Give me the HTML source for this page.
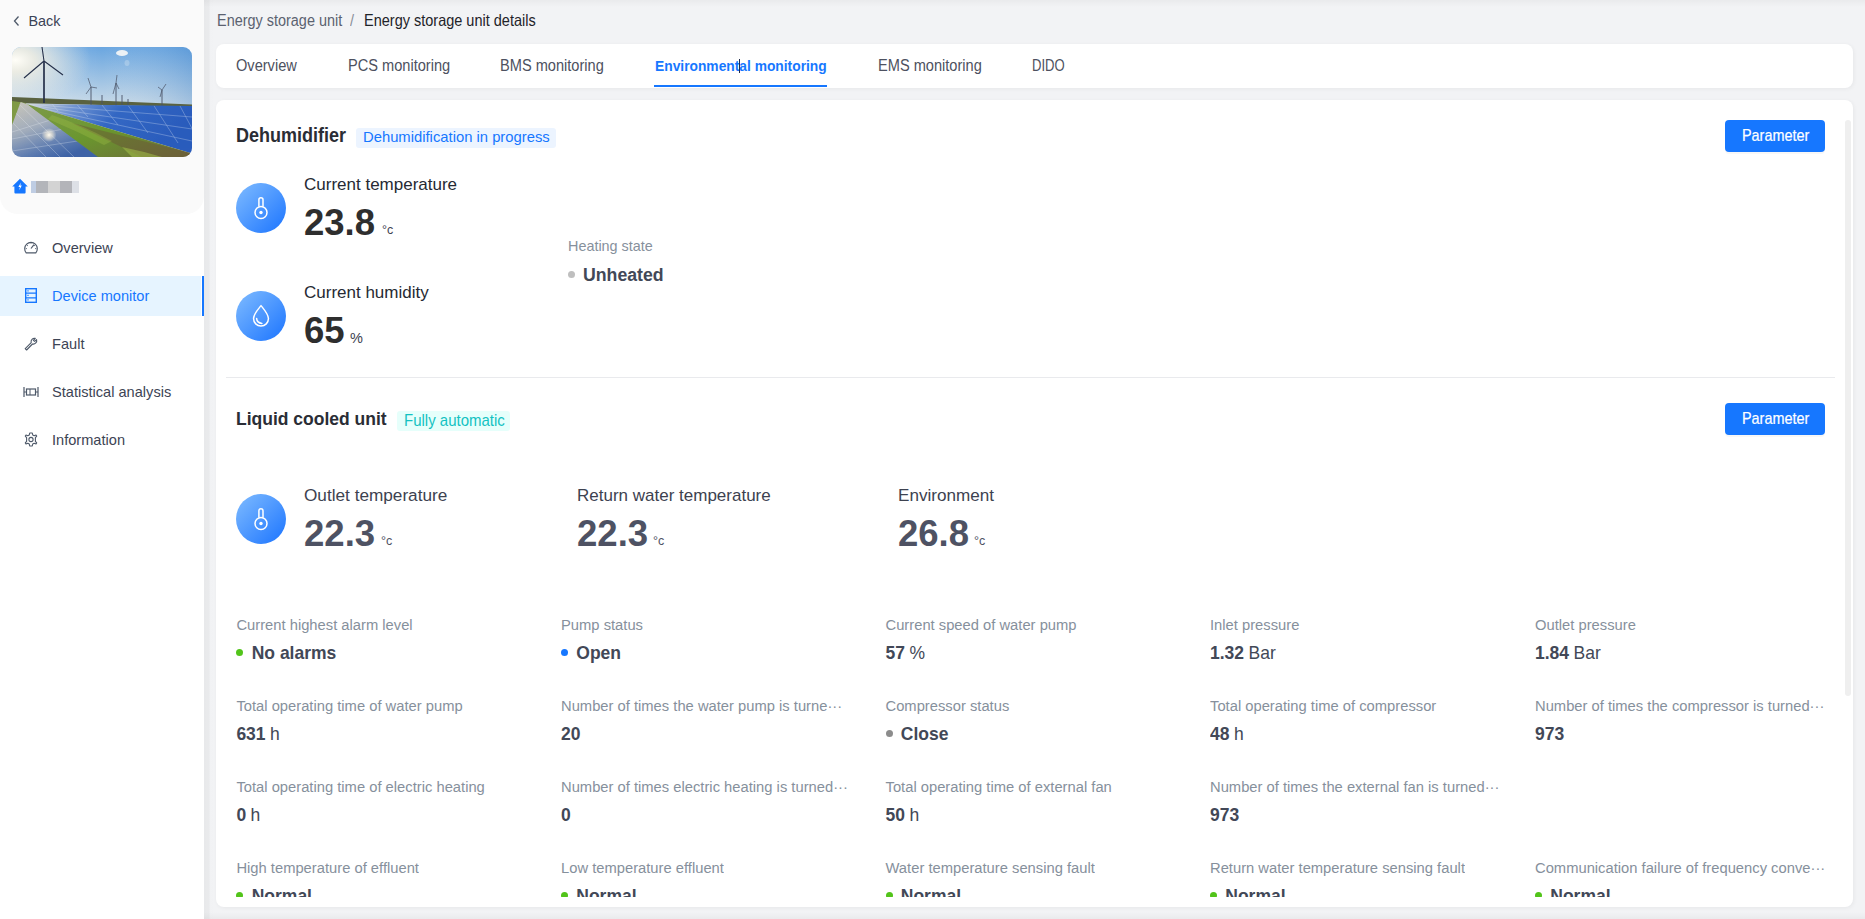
<!DOCTYPE html>
<html><head><meta charset="utf-8"><style>
html,body{margin:0;padding:0;width:1865px;height:919px;overflow:hidden;background:#f2f3f5;}
body{position:relative;font-family:"Liberation Sans", sans-serif;}
.t{position:absolute;white-space:nowrap;}
</style></head><body>
<div style="position:absolute;left:204px;top:0px;width:1661px;height:919px;background:#f2f3f5;"></div>
<div style="position:absolute;left:204px;top:0px;width:1661px;height:7px;background:linear-gradient(180deg,rgba(0,0,0,0.035),rgba(0,0,0,0));"></div>
<div style="position:absolute;left:204px;top:912px;width:1661px;height:7px;background:linear-gradient(0deg,rgba(0,0,0,0.035),rgba(0,0,0,0));"></div>
<div style="position:absolute;left:0px;top:0px;width:204px;height:919px;background:#ffffff;"></div>
<div style="position:absolute;left:0px;top:0px;width:204px;height:214px;background:#fafafa;border-radius:0 0 18px 18px;"></div>
<div style="position:absolute;left:204px;top:0px;width:12px;height:919px;background:linear-gradient(90deg,rgba(0,0,0,0.045),rgba(0,0,0,0.035) 40%,rgba(0,0,0,0.005) 55%,rgba(0,0,0,0));"></div>
<svg style="position:absolute;left:12px;top:14px" width="10" height="14" viewBox="0 0 10 14"><path d="M6.5 2.5 L2.5 7 L6.5 11.5" fill="none" stroke="#4e5969" stroke-width="1.3"/></svg>
<div class="t" style="left:28.5px;top:13.71px;font-size:14.4px;line-height:14.4px;color:#3a4356;transform:scaleY(1.05);transform-origin:0 12.19px;">Back</div>
<svg style="position:absolute;left:12px;top:47px;border-radius:9px" width="180" height="110" viewBox="0 0 180 110">
<defs>
<linearGradient id="sky" x1="0" y1="0" x2="0" y2="1"><stop offset="0" stop-color="#6aa6e0"/><stop offset="0.5" stop-color="#c2d6e6"/><stop offset="0.62" stop-color="#e2e4e0"/></linearGradient>
<linearGradient id="skyr" x1="0" y1="0" x2="1" y2="0"><stop offset="0" stop-color="#ffffff" stop-opacity="0.3"/><stop offset="0.5" stop-color="#ffffff" stop-opacity="0"/><stop offset="1" stop-color="#2a70c0" stop-opacity="0.22"/></linearGradient>
<radialGradient id="sun" cx="0.02" cy="0.12" r="0.42"><stop offset="0" stop-color="#fffef8" stop-opacity="1"/><stop offset="0.25" stop-color="#f6f1e2" stop-opacity="0.85"/><stop offset="1" stop-color="#f0ecdf" stop-opacity="0"/></radialGradient>
<linearGradient id="pan" x1="0" y1="0" x2="1" y2="0.3"><stop offset="0" stop-color="#d0d3d8"/><stop offset="0.3" stop-color="#6a8fd0"/><stop offset="0.55" stop-color="#3468c4"/><stop offset="1" stop-color="#2a5cbc"/></linearGradient>
<linearGradient id="pan2" x1="0" y1="0" x2="0.6" y2="1"><stop offset="0" stop-color="#c9c6bb"/><stop offset="0.45" stop-color="#a2adbc"/><stop offset="0.8" stop-color="#5c7bb0"/><stop offset="1" stop-color="#3e63a6"/></linearGradient>
<clipPath id="lp"><path d="M8.6 55 L14.6 56.9 L86 110 L0 110 L0 78 Z"/></clipPath>
<clipPath id="rp"><path d="M14.6 56.9 L180 59 L180 106.5 Z"/></clipPath>
<radialGradient id="refl" cx="0.5" cy="0.5" r="0.5"><stop offset="0" stop-color="#fffbef" stop-opacity="1"/><stop offset="0.5" stop-color="#f8f0dc" stop-opacity="0.6"/><stop offset="1" stop-color="#fffbef" stop-opacity="0"/></radialGradient>
<linearGradient id="grass" x1="0" y1="0" x2="1" y2="1"><stop offset="0" stop-color="#7d9a4a"/><stop offset="0.5" stop-color="#6a962e"/><stop offset="1" stop-color="#6e6a3a"/></linearGradient>
</defs>
<rect width="180" height="110" fill="url(#sky)"/>
<rect width="180" height="60" fill="url(#skyr)"/>
<rect width="180" height="110" fill="url(#sun)"/>
<ellipse cx="110" cy="6" rx="6" ry="3" fill="#f2f4f6" opacity="0.95"/>
<ellipse cx="115" cy="16" rx="2.5" ry="3" fill="#e6eef6" opacity="0.3"/>
<path d="M0 50 L180 57.5 L180 60 L0 56 Z" fill="#5a6240"/>
<path d="M0 54 L14 56 L20 80 L0 82 Z" fill="#7f9a44"/>
<g stroke="#25304a" fill="none">
<path d="M32 14 L32 56" stroke-width="1.7"/>
<path d="M32 14 L30 0 M32 14 L12 31 M32 14 L51 28" stroke-width="1.1"/>
</g>
<g stroke="#4a5366" fill="none">
<path d="M79 40 L79 59 M104 36 L104 59 M110 48 L110 58 M150 43 L150 61 M90 48 L90 57 M116 52 L116 59" stroke-width="0.9"/>
<path d="M79 40 L76 31 M79 40 L74 47 M79 40 L85 41 M104 36 L105 28 M104 36 L101 47 M104 36 L107 42 M150 43 L154 37 M150 43 L146 40 M150 43 L148 50" stroke-width="0.7"/>
</g>
<path d="M14.6 56.9 L180 59 L180 106.5 Z" fill="url(#pan)"/>
<g stroke="#e3ebf7" stroke-width="0.5" opacity="0.6" clip-path="url(#rp)">
<path d="M14 57 L180 70 M14 57.5 L180 82 M14 58 L180 94"/>
<path d="M40 57 L46 64 M65 57.6 L76 70 M90 58 L106 78 M116 58.4 L136 86 M142 58.8 L166 96 M168 59 L190 100"/>
</g>
<path d="M14.6 56.9 L180 106.5 L180 110 L80 110 Z" fill="url(#grass)"/>
<path d="M60 76 L180 106.5 L180 110 L130 110 Z" fill="#6a5238" opacity="0.45"/>
<path d="M40 68 Q70 78 100 94 L92 98 Q65 84 36 72 Z" fill="#a8c84a" opacity="0.3"/>
<path d="M110 100 Q130 104 150 110 L120 110 Z" fill="#a8c84a" opacity="0.5"/>
<path d="M8.6 55 L14.6 56.9 L86 110 L0 110 L0 78 Z" fill="url(#pan2)"/>
<ellipse cx="37" cy="88" rx="7.5" ry="7" fill="url(#refl)"/>
<g stroke="#eef2f7" stroke-width="0.5" opacity="0.55" clip-path="url(#lp)">
<path d="M0 75 L34 110 M0 62 L48 110 M6 56 L62 110 M0 92 L62 80 M0 104 L72 93 M0 85 L48 70"/>
</g>
</svg>
<svg style="position:absolute;left:12px;top:178px" width="16" height="16" viewBox="0 0 16 16"><path d="M8 0.8 L15.8 8.6 L13.6 8.6 L13.6 14.6 Q13.6 15.6 12.6 15.6 L3.4 15.6 Q2.4 15.6 2.4 14.6 L2.4 8.6 L0.2 8.6 Z" fill="#1677ff"/><path d="M8.9 4.5 L6.4 9 L8 9 L7.2 12.2 L9.8 7.6 L8.2 7.6 Z" fill="#fff"/></svg>
<div style="position:absolute;left:31px;top:181px;width:5px;height:12px;background:#bfcde3;"></div>
<div style="position:absolute;left:36px;top:181px;width:12px;height:12px;background:#b3b5ba;"></div>
<div style="position:absolute;left:48px;top:181px;width:12px;height:12px;background:#d3d3d3;"></div>
<div style="position:absolute;left:60px;top:181px;width:12px;height:12px;background:#b3b4b9;"></div>
<div style="position:absolute;left:72px;top:181px;width:7px;height:12px;background:#dde0e6;"></div>
<div style="position:absolute;left:0px;top:276px;width:201px;height:40px;background:#e6f4ff;"></div>
<div style="position:absolute;left:202px;top:276px;width:2px;height:40px;background:#1677ff;"></div>
<svg style="position:absolute;left:23px;top:240px" width="16" height="14" viewBox="0 0 16 14"><path d="M3.2 12.8 A6.3 6.3 0 1 1 12.8 12.8 Z" fill="none" stroke="#4e5969" stroke-width="1.2" stroke-linejoin="round"/><path d="M8 8.5 L11 4.6" stroke="#4e5969" stroke-width="1.2"/><path d="M4 5.2 L4.8 5.8 M8 2.6 L8 3.6 M12 5.2 L11.2 5.8 M2.8 8.6 L3.8 8.6 M13.2 8.6 L12.2 8.6" stroke="#4e5969" stroke-width="1"/></svg>
<div class="t" style="left:52px;top:240.74px;font-size:14.6px;line-height:14.6px;color:#3d4454;transform:scaleY(1.05);transform-origin:0 12.36px;">Overview</div>
<svg style="position:absolute;left:25px;top:288px" width="12" height="15" viewBox="0 0 12 15"><rect x="0.7" y="0.7" width="10.6" height="13.6" fill="none" stroke="#1677ff" stroke-width="1.4"/><path d="M0.7 5.2 H11.3 M0.7 9.8 H11.3" stroke="#1677ff" stroke-width="1.2"/><path d="M3 2.3 V3.6 M3 6.8 V8.1 M3 11.3 V12.6" stroke="#1677ff" stroke-width="1.2"/></svg>
<div class="t" style="left:52px;top:288.74px;font-size:14.6px;line-height:14.6px;color:#1677ff;transform:scaleY(1.05);transform-origin:0 12.36px;">Device monitor</div>
<svg style="position:absolute;left:24px;top:337px" width="14" height="14" viewBox="0 0 14 14"><path d="M12.6 2.6 L10.6 4.4 L9.4 3.3 L11.3 1.3 A3.5 3.5 0 0 0 7.2 5.7 L1.2 11.6 L2.6 13 L8.5 7 A3.5 3.5 0 0 0 12.6 2.6 Z" fill="none" stroke="#4e5969" stroke-width="1.1" stroke-linejoin="round"/></svg>
<div class="t" style="left:52px;top:336.74px;font-size:14.6px;line-height:14.6px;color:#3d4454;transform:scaleY(1.05);transform-origin:0 12.36px;">Fault</div>
<svg style="position:absolute;left:23px;top:386px" width="16" height="12" viewBox="0 0 16 12"><path d="M1 1 V11 M15 1 V11" stroke="#4e5969" stroke-width="1.2"/><rect x="3.5" y="3" width="9" height="6" fill="none" stroke="#4e5969" stroke-width="1.2"/><path d="M1 6 H3.5 M12.5 6 H15 M7 3 V9" stroke="#4e5969" stroke-width="1"/></svg>
<div class="t" style="left:52px;top:384.74px;font-size:14.6px;line-height:14.6px;color:#3d4454;transform:scaleY(1.05);transform-origin:0 12.36px;">Statistical analysis</div>
<svg style="position:absolute;left:24px;top:432px" width="14" height="15" viewBox="0 0 14 15"><path d="M7 1 L8.3 1 L8.7 2.9 L10.2 3.7 L12 3 L12.7 4.1 L11.4 5.6 L11.4 9.4 L12.7 10.9 L12 12 L10.2 11.3 L8.7 12.1 L8.3 14 L5.7 14 L5.3 12.1 L3.8 11.3 L2 12 L1.3 10.9 L2.6 9.4 L2.6 5.6 L1.3 4.1 L2 3 L3.8 3.7 L5.3 2.9 L5.7 1 Z" fill="none" stroke="#4e5969" stroke-width="1.1" stroke-linejoin="round"/><circle cx="7" cy="7.5" r="2.1" fill="none" stroke="#4e5969" stroke-width="1.1"/></svg>
<div class="t" style="left:52px;top:432.74px;font-size:14.6px;line-height:14.6px;color:#3d4454;transform:scaleY(1.05);transform-origin:0 12.36px;">Information</div>
<div class="t" style="left:217px;top:13.77px;font-size:14.45px;line-height:14.45px;color:#5b6270;transform:scaleY(1.08);transform-origin:0 12.23px;">Energy storage unit</div>
<div class="t" style="left:350px;top:13.73px;font-size:14.5px;line-height:14.5px;color:#8a8f99;transform:scaleY(1.08);transform-origin:0 12.27px;">/</div>
<div class="t" style="left:364px;top:13.73px;font-size:14.5px;line-height:14.5px;color:#1f2329;transform:scaleY(1.08);transform-origin:0 12.27px;">Energy storage unit details</div>
<div style="position:absolute;left:216px;top:44px;width:1637px;height:44px;background:#fff;border-radius:8px;box-shadow:1px 1px 4px rgba(0,0,0,0.05);"></div>
<div class="t" style="left:236px;top:58.64px;font-size:14.6px;line-height:14.6px;color:#4d5160;transform:scaleY(1.1);transform-origin:0 12.36px;">Overview</div>
<div class="t" style="left:348px;top:58.64px;font-size:14.6px;line-height:14.6px;color:#4d5160;transform:scaleY(1.1);transform-origin:0 12.36px;">PCS monitoring</div>
<div class="t" style="left:500px;top:58.64px;font-size:14.6px;line-height:14.6px;color:#4d5160;transform:scaleY(1.1);transform-origin:0 12.36px;">BMS monitoring</div>
<div class="t" style="left:878px;top:58.64px;font-size:14.6px;line-height:14.6px;color:#4d5160;transform:scaleY(1.1);transform-origin:0 12.36px;">EMS monitoring</div>
<div class="t" style="left:1032px;top:59.91px;font-size:13.1px;line-height:13.1px;color:#4d5160;transform:scaleY(1.22);transform-origin:0 11.09px;">DIDO</div>
<div class="t" style="left:655px;top:59.72px;font-size:13.8px;line-height:13.8px;color:#1677ff;font-weight:700;transform:scaleY(1.12);transform-origin:0 11.68px;">Environmental monitoring</div>
<div style="position:absolute;left:654px;top:85px;width:173px;height:2px;background:#1677ff;"></div>
<div style="position:absolute;left:739px;top:59px;width:1px;height:14px;background:#1f2a4a;"></div>
<div style="position:absolute;left:216px;top:100px;width:1637px;height:807px;background:#fff;border-radius:8px;box-shadow:1px 1px 4px rgba(0,0,0,0.05);"></div>
<div style="position:absolute;left:1845px;top:120px;width:6px;height:576px;background:#efefef;border-radius:3px;"></div>
<div class="t" style="left:236px;top:127.46px;font-size:18px;line-height:18px;color:#2a2d35;font-weight:700;transform:scaleY(1.08);transform-origin:0 15.24px;">Dehumidifier</div>
<div style="position:absolute;left:356px;top:128px;width:200px;height:19.5px;background:#ecf4ff;border-radius:3px;"></div>
<div class="t" style="left:363px;top:130.27px;font-size:14.8px;line-height:14.8px;color:#1677ff;">Dehumidification in progress</div>
<div style="position:absolute;left:1725px;top:120px;width:100px;height:32px;background:#1677ff;border-radius:4px;box-shadow:0 2px 0 rgba(0,0,0,0.03);"></div>
<div class="t" style="left:1742px;top:128.81px;font-size:14.4px;line-height:14.4px;color:#fff;transform:scaleY(1.12);transform-origin:0 12.19px;-webkit-text-stroke:0.2px #fff;">Parameter</div>
<svg style="position:absolute;left:236px;top:183px" width="50" height="50" viewBox="0 0 50 50"><defs><linearGradient id="g183" x1="0" y1="0" x2="1" y2="1"><stop offset="0" stop-color="#80bcff"/><stop offset="1" stop-color="#1b74ff"/></linearGradient></defs><circle cx="25" cy="25" r="25" fill="url(#g183)"/><path d="M22.9 23.6 V16.7 A2.05 2.05 0 0 1 27 16.7 V23.6" fill="none" stroke="#fff" stroke-width="1.5"/><circle cx="25" cy="29.5" r="6" fill="none" stroke="#fff" stroke-width="1.5"/><circle cx="25" cy="29.5" r="1.7" fill="#fff"/></svg>
<div class="t" style="left:304px;top:175.91px;font-size:17px;line-height:17px;color:#262a33;">Current temperature</div>
<div class="t" style="left:304px;top:204.80px;font-size:36.5px;line-height:36.5px;color:#2e2e2e;font-weight:700;">23.8</div>
<div class="t" style="left:382px;top:224.42px;font-size:12.5px;line-height:12.5px;color:#3d4250;">°c</div>
<svg style="position:absolute;left:236px;top:291px" width="50" height="50" viewBox="0 0 50 50"><defs><linearGradient id="g291" x1="0" y1="0" x2="1" y2="1"><stop offset="0" stop-color="#80bcff"/><stop offset="1" stop-color="#1b74ff"/></linearGradient></defs><circle cx="25" cy="25" r="25" fill="url(#g291)"/><path d="M25 14.6 C28 18.3 32.45 23.3 32.45 27.6 A7.45 7.45 0 0 1 17.55 27.6 C17.55 23.3 22 18.3 25 14.6 Z" fill="none" stroke="#fff" stroke-width="1.5" stroke-linejoin="round"/><path d="M20.6 27.4 Q20.9 31.9 25.9 32.4" fill="none" stroke="#fff" stroke-width="1.5" stroke-linecap="round"/></svg>
<div class="t" style="left:304px;top:283.91px;font-size:17px;line-height:17px;color:#262a33;">Current humidity</div>
<div class="t" style="left:304px;top:312.60px;font-size:36.5px;line-height:36.5px;color:#2e2e2e;font-weight:700;">65</div>
<div class="t" style="left:350px;top:331.23px;font-size:14.5px;line-height:14.5px;color:#3d4250;">%</div>
<div class="t" style="left:568px;top:239.01px;font-size:14.4px;line-height:14.4px;color:#86909c;">Heating state</div>
<div style="position:absolute;left:568px;top:270.5px;width:7px;height:7px;background:#bfbfbf;border-radius:50%;"></div>
<div class="t" style="left:583px;top:266.72px;font-size:17.7px;line-height:17.7px;color:#424857;font-weight:700;transform:scaleY(1.06);transform-origin:0 14.98px;">Unheated</div>
<div style="position:absolute;left:226px;top:377px;width:1609px;height:1px;background:#e9eaed;"></div>
<div class="t" style="left:236px;top:411.49px;font-size:17.5px;line-height:17.5px;color:#2a2d35;font-weight:700;transform:scaleY(1.1);transform-origin:0 14.81px;">Liquid cooled unit</div>
<div style="position:absolute;left:397px;top:411px;width:113px;height:20px;background:#e6fffb;border-radius:3px;"></div>
<div class="t" style="left:404px;top:413.30px;font-size:15px;line-height:15px;color:#13c2c2;transform:scaleY(1.08);transform-origin:0 12.70px;">Fully automatic</div>
<div style="position:absolute;left:1725px;top:403px;width:100px;height:32px;background:#1677ff;border-radius:4px;box-shadow:0 2px 0 rgba(0,0,0,0.03);"></div>
<div class="t" style="left:1742px;top:411.81px;font-size:14.4px;line-height:14.4px;color:#fff;transform:scaleY(1.12);transform-origin:0 12.19px;-webkit-text-stroke:0.2px #fff;">Parameter</div>
<svg style="position:absolute;left:236px;top:494px" width="50" height="50" viewBox="0 0 50 50"><defs><linearGradient id="g494" x1="0" y1="0" x2="1" y2="1"><stop offset="0" stop-color="#80bcff"/><stop offset="1" stop-color="#1b74ff"/></linearGradient></defs><circle cx="25" cy="25" r="25" fill="url(#g494)"/><path d="M22.9 23.6 V16.7 A2.05 2.05 0 0 1 27 16.7 V23.6" fill="none" stroke="#fff" stroke-width="1.5"/><circle cx="25" cy="29.5" r="6" fill="none" stroke="#fff" stroke-width="1.5"/><circle cx="25" cy="29.5" r="1.7" fill="#fff"/></svg>
<div class="t" style="left:304px;top:487.04px;font-size:17.2px;line-height:17.2px;color:#3d4250;">Outlet temperature</div>
<div class="t" style="left:304px;top:515.72px;font-size:36.6px;line-height:36.6px;color:#4e5263;font-weight:700;">22.3</div>
<div class="t" style="left:381px;top:535.42px;font-size:12.5px;line-height:12.5px;color:#4e5263;">°c</div>
<div class="t" style="left:577px;top:487.21px;font-size:17px;line-height:17px;color:#3d4250;">Return water temperature</div>
<div class="t" style="left:577px;top:515.72px;font-size:36.6px;line-height:36.6px;color:#4e5263;font-weight:700;">22.3</div>
<div class="t" style="left:653px;top:535.42px;font-size:12.5px;line-height:12.5px;color:#4e5263;">°c</div>
<div class="t" style="left:898px;top:487.12px;font-size:17.1px;line-height:17.1px;color:#3d4250;">Environment</div>
<div class="t" style="left:898px;top:515.80px;font-size:36.5px;line-height:36.5px;color:#4e5263;font-weight:700;">26.8</div>
<div class="t" style="left:974px;top:535.42px;font-size:12.5px;line-height:12.5px;color:#4e5263;">°c</div>
<div style="position:absolute;left:216px;top:100px;width:1620px;height:797px;overflow:hidden">
<div class="t" style="left:20.4px;top:517.71px;font-size:14.75px;line-height:14.75px;color:#86909c;transform:scaleY(1.04);transform-origin:0 12.49px;">Current highest alarm level</div>
<div style="position:absolute;left:20.4px;top:549.0px;width:7px;height:7px;border-radius:50%;background:#52c41a"></div>
<div class="t" style="left:35.7px;top:544.89px;font-size:17.5px;line-height:17.5px;color:#424857;font-weight:700;transform:scaleY(1.1);transform-origin:0 14.81px;">No alarms</div>
<div class="t" style="left:345.0px;top:517.71px;font-size:14.75px;line-height:14.75px;color:#86909c;transform:scaleY(1.04);transform-origin:0 12.49px;">Pump status</div>
<div style="position:absolute;left:345.0px;top:549.0px;width:7px;height:7px;border-radius:50%;background:#1677ff"></div>
<div class="t" style="left:360.3px;top:544.89px;font-size:17.5px;line-height:17.5px;color:#424857;font-weight:700;transform:scaleY(1.1);transform-origin:0 14.81px;">Open</div>
<div class="t" style="left:669.5px;top:517.71px;font-size:14.75px;line-height:14.75px;color:#86909c;transform:scaleY(1.04);transform-origin:0 12.49px;">Current speed of water pump</div>
<div class="t" style="left:669.5px;top:544.89px;font-size:17.5px;line-height:17.5px;color:#424857;font-weight:700;transform:scaleY(1.1);transform-origin:0 14.81px;">57</div>
<div class="t" style="left:693.5px;top:544.89px;font-size:17.5px;line-height:17.5px;color:#424857;transform:scaleY(1.1);transform-origin:0 14.81px;">%</div>
<div class="t" style="left:994.0px;top:517.71px;font-size:14.75px;line-height:14.75px;color:#86909c;transform:scaleY(1.04);transform-origin:0 12.49px;">Inlet pressure</div>
<div class="t" style="left:994.0px;top:544.89px;font-size:17.5px;line-height:17.5px;color:#424857;font-weight:700;transform:scaleY(1.1);transform-origin:0 14.81px;">1.32</div>
<div class="t" style="left:1032.6px;top:544.89px;font-size:17.5px;line-height:17.5px;color:#424857;transform:scaleY(1.1);transform-origin:0 14.81px;">Bar</div>
<div class="t" style="left:1319.0px;top:517.71px;font-size:14.75px;line-height:14.75px;color:#86909c;transform:scaleY(1.04);transform-origin:0 12.49px;">Outlet pressure</div>
<div class="t" style="left:1319.0px;top:544.89px;font-size:17.5px;line-height:17.5px;color:#424857;font-weight:700;transform:scaleY(1.1);transform-origin:0 14.81px;">1.84</div>
<div class="t" style="left:1357.6px;top:544.89px;font-size:17.5px;line-height:17.5px;color:#424857;transform:scaleY(1.1);transform-origin:0 14.81px;">Bar</div>
<div class="t" style="left:20.4px;top:598.51px;font-size:14.75px;line-height:14.75px;color:#86909c;transform:scaleY(1.04);transform-origin:0 12.49px;">Total operating time of water pump</div>
<div class="t" style="left:20.4px;top:625.89px;font-size:17.5px;line-height:17.5px;color:#424857;font-weight:700;transform:scaleY(1.1);transform-origin:0 14.81px;">631</div>
<div class="t" style="left:54.1px;top:625.89px;font-size:17.5px;line-height:17.5px;color:#424857;transform:scaleY(1.1);transform-origin:0 14.81px;">h</div>
<div class="t" style="left:345.0px;top:598.51px;font-size:14.75px;line-height:14.75px;color:#86909c;transform:scaleY(1.04);transform-origin:0 12.49px;">Number of times the water pump is turne···</div>
<div class="t" style="left:345.0px;top:625.89px;font-size:17.5px;line-height:17.5px;color:#424857;font-weight:700;transform:scaleY(1.1);transform-origin:0 14.81px;">20</div>
<div class="t" style="left:669.5px;top:598.51px;font-size:14.75px;line-height:14.75px;color:#86909c;transform:scaleY(1.04);transform-origin:0 12.49px;">Compressor status</div>
<div style="position:absolute;left:669.5px;top:630.0px;width:7px;height:7px;border-radius:50%;background:#8c8c8c"></div>
<div class="t" style="left:684.8px;top:625.89px;font-size:17.5px;line-height:17.5px;color:#424857;font-weight:700;transform:scaleY(1.1);transform-origin:0 14.81px;">Close</div>
<div class="t" style="left:994.0px;top:598.51px;font-size:14.75px;line-height:14.75px;color:#86909c;transform:scaleY(1.04);transform-origin:0 12.49px;">Total operating time of compressor</div>
<div class="t" style="left:994.0px;top:625.89px;font-size:17.5px;line-height:17.5px;color:#424857;font-weight:700;transform:scaleY(1.1);transform-origin:0 14.81px;">48</div>
<div class="t" style="left:1018.0px;top:625.89px;font-size:17.5px;line-height:17.5px;color:#424857;transform:scaleY(1.1);transform-origin:0 14.81px;">h</div>
<div class="t" style="left:1319.0px;top:598.51px;font-size:14.75px;line-height:14.75px;color:#86909c;transform:scaleY(1.04);transform-origin:0 12.49px;">Number of times the compressor is turned···</div>
<div class="t" style="left:1319.0px;top:625.89px;font-size:17.5px;line-height:17.5px;color:#424857;font-weight:700;transform:scaleY(1.1);transform-origin:0 14.81px;">973</div>
<div class="t" style="left:20.4px;top:679.51px;font-size:14.75px;line-height:14.75px;color:#86909c;transform:scaleY(1.04);transform-origin:0 12.49px;">Total operating time of electric heating</div>
<div class="t" style="left:20.4px;top:706.89px;font-size:17.5px;line-height:17.5px;color:#424857;font-weight:700;transform:scaleY(1.1);transform-origin:0 14.81px;">0</div>
<div class="t" style="left:34.6px;top:706.89px;font-size:17.5px;line-height:17.5px;color:#424857;transform:scaleY(1.1);transform-origin:0 14.81px;">h</div>
<div class="t" style="left:345.0px;top:679.51px;font-size:14.75px;line-height:14.75px;color:#86909c;transform:scaleY(1.04);transform-origin:0 12.49px;">Number of times electric heating is turned···</div>
<div class="t" style="left:345.0px;top:706.89px;font-size:17.5px;line-height:17.5px;color:#424857;font-weight:700;transform:scaleY(1.1);transform-origin:0 14.81px;">0</div>
<div class="t" style="left:669.5px;top:679.51px;font-size:14.75px;line-height:14.75px;color:#86909c;transform:scaleY(1.04);transform-origin:0 12.49px;">Total operating time of external fan</div>
<div class="t" style="left:669.5px;top:706.89px;font-size:17.5px;line-height:17.5px;color:#424857;font-weight:700;transform:scaleY(1.1);transform-origin:0 14.81px;">50</div>
<div class="t" style="left:693.5px;top:706.89px;font-size:17.5px;line-height:17.5px;color:#424857;transform:scaleY(1.1);transform-origin:0 14.81px;">h</div>
<div class="t" style="left:994.0px;top:679.51px;font-size:14.75px;line-height:14.75px;color:#86909c;transform:scaleY(1.04);transform-origin:0 12.49px;">Number of times the external fan is turned···</div>
<div class="t" style="left:994.0px;top:706.89px;font-size:17.5px;line-height:17.5px;color:#424857;font-weight:700;transform:scaleY(1.1);transform-origin:0 14.81px;">973</div>
<div class="t" style="left:20.4px;top:760.51px;font-size:14.75px;line-height:14.75px;color:#86909c;transform:scaleY(1.04);transform-origin:0 12.49px;">High temperature of effluent</div>
<div style="position:absolute;left:20.4px;top:792.0px;width:7px;height:7px;border-radius:50%;background:#52c41a"></div>
<div class="t" style="left:35.7px;top:787.89px;font-size:17.5px;line-height:17.5px;color:#424857;font-weight:700;transform:scaleY(1.1);transform-origin:0 14.81px;">Normal</div>
<div class="t" style="left:345.0px;top:760.51px;font-size:14.75px;line-height:14.75px;color:#86909c;transform:scaleY(1.04);transform-origin:0 12.49px;">Low temperature effluent</div>
<div style="position:absolute;left:345.0px;top:792.0px;width:7px;height:7px;border-radius:50%;background:#52c41a"></div>
<div class="t" style="left:360.3px;top:787.89px;font-size:17.5px;line-height:17.5px;color:#424857;font-weight:700;transform:scaleY(1.1);transform-origin:0 14.81px;">Normal</div>
<div class="t" style="left:669.5px;top:760.51px;font-size:14.75px;line-height:14.75px;color:#86909c;transform:scaleY(1.04);transform-origin:0 12.49px;">Water temperature sensing fault</div>
<div style="position:absolute;left:669.5px;top:792.0px;width:7px;height:7px;border-radius:50%;background:#52c41a"></div>
<div class="t" style="left:684.8px;top:787.89px;font-size:17.5px;line-height:17.5px;color:#424857;font-weight:700;transform:scaleY(1.1);transform-origin:0 14.81px;">Normal</div>
<div class="t" style="left:994.0px;top:760.51px;font-size:14.75px;line-height:14.75px;color:#86909c;transform:scaleY(1.04);transform-origin:0 12.49px;">Return water temperature sensing fault</div>
<div style="position:absolute;left:994.0px;top:792.0px;width:7px;height:7px;border-radius:50%;background:#52c41a"></div>
<div class="t" style="left:1009.3px;top:787.89px;font-size:17.5px;line-height:17.5px;color:#424857;font-weight:700;transform:scaleY(1.1);transform-origin:0 14.81px;">Normal</div>
<div class="t" style="left:1319.0px;top:760.51px;font-size:14.75px;line-height:14.75px;color:#86909c;transform:scaleY(1.04);transform-origin:0 12.49px;">Communication failure of frequency conve···</div>
<div style="position:absolute;left:1319.0px;top:792.0px;width:7px;height:7px;border-radius:50%;background:#52c41a"></div>
<div class="t" style="left:1334.3px;top:787.89px;font-size:17.5px;line-height:17.5px;color:#424857;font-weight:700;transform:scaleY(1.1);transform-origin:0 14.81px;">Normal</div>
</div>
</body></html>
